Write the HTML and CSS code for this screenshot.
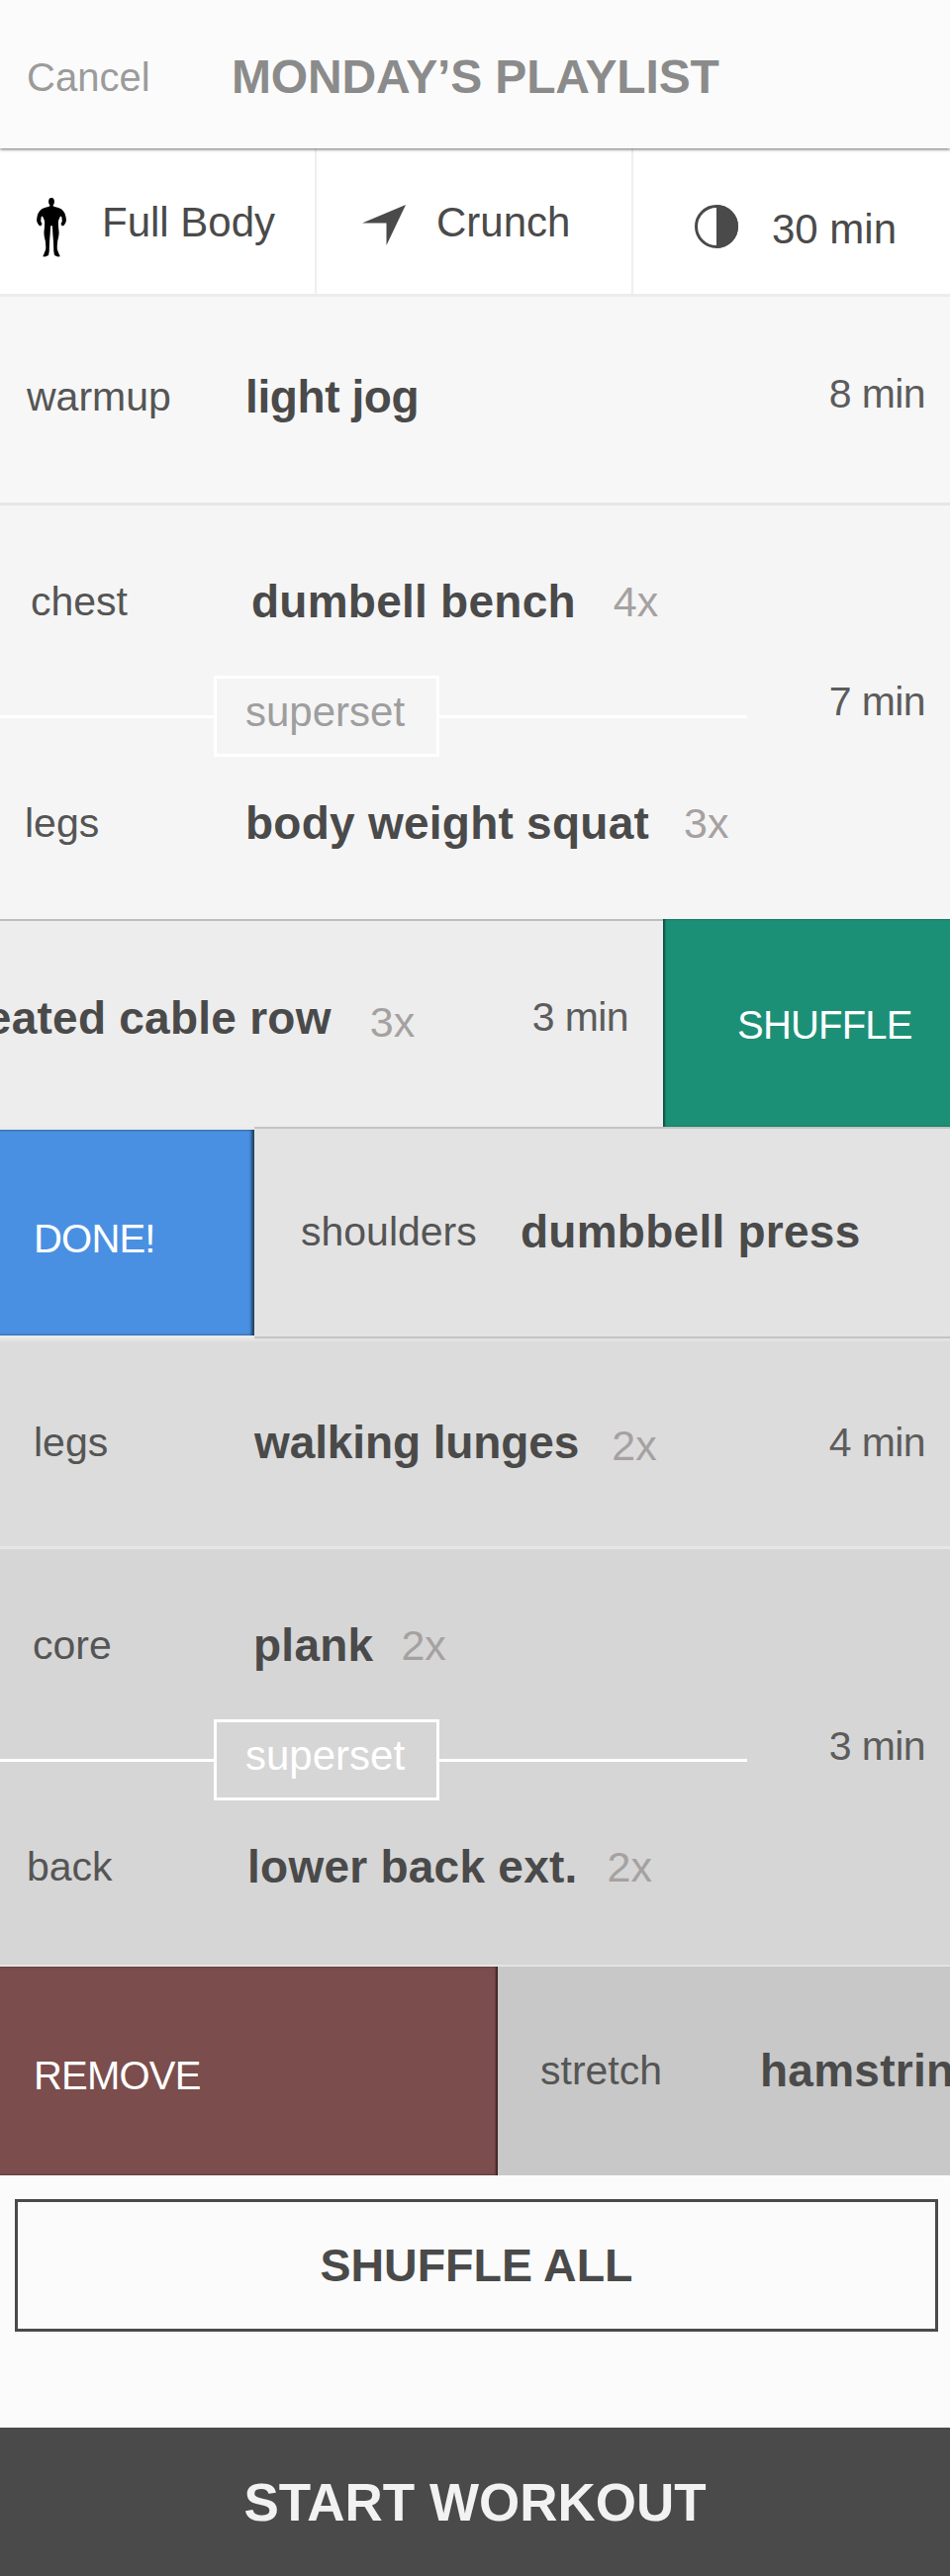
FILE: index.html
```html
<!DOCTYPE html>
<html lang="en">
<head>
    <meta charset="utf-8"/>
    <meta name="viewport" content="width=device-width, initial-scale=1.0"/>
    <title>Monday's Playlist</title>
    <link rel="stylesheet" href="styles.css">
</head>
<body>
<div class="header">
    <span class="cancel">Cancel</span>
    <h1 class="title">MONDAY’S PLAYLIST</h1>
</div>

<div class="filters">
    <div class="filter filter-body">
        <svg class="icon-body" viewBox="110 88 95 182">
            <path d="M157 88c-6 0-10 5-10 12 0 5 2 9 4 11l-1 4c-8 3-18 4-25 9-8 6-13 16-14 27-1 6-1 10 1 14l5 9 6 2 4-7-4-8 1-12c2-4 3-5 5-2 3 6 6 12 6 18 0 10-1 19-2 28-1 10 2 20 4 29 1 10 2 18 1 27l-6 15-3 6 8 1 10-5 2-12 1-30 2-24 1-24 3-1 3 1 1 24 2 24 1 30 2 12 10 5 8-1-3-6-6-15c-1-9 0-17 1-27 2-9 5-19 4-29-1-9-2-18-2-28 0-6 3-12 6-18 2-3 3-2 5 2l1 12-4 8 4 7 6-2 5-9c2-4 2-8 1-14-1-11-6-21-14-27-7-5-17-6-25-9l-1-4c2-2 4-6 4-11 0-7-4-12-10-12z"/>
        </svg>
        <span>Full Body</span>
    </div>
    <div class="filter filter-type">
        <svg class="icon-arrow" viewBox="0 0 44 41">
            <path d="M44 0L0 18.500H24.500V41z"/>
        </svg>
        <span>Crunch</span>
    </div>
    <div class="filter filter-time">
        <svg class="icon-time" viewBox="0 0 44 44">
            <circle cx="22" cy="22" r="20.500" fill="none" stroke="#4a4a4a" stroke-width="3"/>
            <path d="M22 0a22 22 0 0 1 0 44z" fill="#4a4a4a"/>
        </svg>
        <span class="filter-time-text">30 min</span>
    </div>
</div>

<div class="row row-warmup">
    <div class="exercise">
        <span class="label">warmup</span>
        <span class="name">light jog</span>
    </div>
    <span class="time">8 min</span>
</div>

<div class="group group-first">
    <div class="group-main">
        <div class="exercise ex-chest">
            <span class="label">chest</span>
            <span class="name">dumbell bench</span>
            <span class="reps">4x</span>
        </div>
        <div class="superset">
            <span class="superset-box">superset</span>
        </div>
        <div class="exercise ex-legs">
            <span class="label">legs</span>
            <span class="name">body weight squat</span>
            <span class="reps reps-near">3x</span>
        </div>
    </div>
    <span class="time">7 min</span>
</div>

<div class="swipe swipe-shuffle">
    <div class="card card-seated">
        <span class="name name-clipped">seated cable row</span>
        <span class="reps reps-low">3x</span>
        <span class="time time-card">3 min</span>
    </div>
    <div class="action action-shuffle">SHUFFLE</div>
</div>

<div class="swipe swipe-done">
    <div class="action action-done">DONE!</div>
    <div class="card card-shoulders">
        <span class="label label-short">shoulders</span>
        <span class="name">dumbbell press</span>
    </div>
</div>

<div class="row row-lunges">
    <div class="exercise">
        <span class="label">legs</span>
        <span class="name">walking lunges</span>
        <span class="reps reps-lunges">2x</span>
    </div>
    <span class="time">4 min</span>
</div>

<div class="group group-second">
    <div class="group-main">
        <div class="exercise ex-core">
            <span class="label">core</span>
            <span class="name">plank</span>
            <span class="reps reps-plank">2x</span>
        </div>
        <div class="superset superset-active">
            <span class="superset-box">superset</span>
        </div>
        <div class="exercise ex-back">
            <span class="label">back</span>
            <span class="name">lower back ext.</span>
            <span class="reps reps-close">2x</span>
        </div>
    </div>
    <span class="time">3 min</span>
</div>

<div class="swipe swipe-remove">
    <div class="action action-remove">REMOVE</div>
    <div class="card card-stretch">
        <span class="label label-stretch">stretch</span>
        <span class="name">hamstring stretch</span>
    </div>
</div>

<div class="bottom">
    <button class="shuffle-all">SHUFFLE ALL</button>
</div>
<button class="start">START WORKOUT</button>
</body>
</html>
```
FILE: styles.css
```css
* {
    box-sizing: border-box;
}

body {
    margin: 0;
    width: 960px;
    height: 2604px;
    overflow: hidden;
    background-color: #fbfbfb;
    color: #4a4a4a;
    font-family: "Liberation Sans", Arial, sans-serif;
    line-height: 50px;
}

/* header */
.header {
    position: relative;
    display: flex;
    height: 150px;
    padding: 53px 0 0 27px;
    background-color: #fbfbfb;
    box-shadow: 0 1px 3px rgba(0,0,0,0.6);
}

.cancel {
    width: 207px;
    color: #9b9b9b;
    font-size: 40px;
}

.title {
    margin: 0;
    color: #8b8b8b;
    font-size: 48px;
    line-height: 50px;
    letter-spacing: -0.150px;
}

/* filter bar */
.filters {
    display: flex;
    height: 150px;
    background-color: #fff;
    border-bottom: 3px solid #ececec;
}

.filter {
    display: flex;
    align-items: flex-start;
    width: 321px;
    padding-top: 50px;
    border-right: 2px solid #efefef;
    font-size: 42px;
}

.filter:last-child {
    border-right: 0;
}

.filter-time-text {
    margin-top: 7px;
}

.filter-body {
    padding-left: 37px;
}

.filter-type {
    padding-left: 46px;
}

.filter-time {
    padding-left: 62px;
}

.icon-body {
    width: 31px;
    height: 61px;
    margin: -1px 35px 0 0;
}

.icon-arrow {
    width: 44px;
    height: 41px;
    margin: 7px 31px 0 0;
    fill: #4a4a4a;
}

.icon-time {
    width: 44px;
    height: 44px;
    margin: 7px 34px 0 0;
}

/* list rows */
.row {
    display: flex;
    align-items: flex-start;
    justify-content: space-between;
    height: 211px;
    padding-right: 25px;
    border-bottom: 3px solid #e6e6e6;
}

.exercise {
    display: flex;
    align-items: flex-start;
}

.label {
    flex: none;
    width: 223px;
    font-size: 41px;
    color: #555;
}

.name {
    font-size: 46px;
    font-weight: bold;
    letter-spacing: 0.250px;
    white-space: nowrap;
}

.reps {
    margin-left: 38px;
    color: #a6a1a1;
    font-size: 43px;
}

.reps-near {
    margin-left: 35px;
}

.reps-close {
    margin-left: 30px;
}

.reps-plank {
    margin-left: 28px;
}

.reps-lunges {
    margin: 3px 0 0 33px;
}

.time {
    margin-top: -3px;
    color: #5c5c5c;
    font-size: 41px;
    letter-spacing: -0.600px;
}

.row-warmup {
    height: 211px;
    padding-top: 76px;
    padding-left: 27px;
    background-color: #f7f7f7;
}

.row-warmup .name {
    margin-left: -2px;
    letter-spacing: -0.400px;
}

.row-lunges {
    height: 213px;
    padding-top: 77px;
    padding-left: 34px;
    background-color: #dcdcdc;
    border-top: 3px solid #e3e3e3;
}

.row-lunges .name {
    letter-spacing: -0.100px;
}

.row-lunges .time {
    margin-top: 0;
}

/* superset groups */
.group {
    display: flex;
    justify-content: space-between;
    height: 418px;
    padding-top: 72px;
    padding-right: 25px;
}

.group-first {
    background-color: #f5f5f5;
}

.group-second {
    height: 422px;
    background-color: #d6d6d6;
    border-bottom: 2px solid #e4e4e4;
}

.group-main {
    width: 755px;
}

.group .time {
    align-self: center;
    margin: 0 0 94px;
}

.ex-chest {
    padding-left: 31px;
}

.ex-legs {
    padding-left: 25px;
}

.ex-core {
    padding-left: 33px;
}

.ex-back {
    padding-left: 27px;
}

.superset {
    display: flex;
    align-items: center;
    margin: 50px 0 42px;
}

.superset::before,
.superset::after {
    content: "";
    height: 3px;
    background-color: #fff;
}

.superset::before {
    width: 216px;
}

.superset::after {
    flex: 1;
}

.superset-box {
    width: 228px;
    height: 82px;
    padding: 9px 0 0 29px;
    border: 3px solid #fff;
    color: #9e9e9e;
    font-size: 42px;
}

.superset-active .superset-box {
    color: #fff;
}

/* swiped rows */
.swipe {
    display: flex;
    overflow: hidden;
    height: 210px;
}

.swipe-done {
    height: 214px;
    background-color: #ebebeb;
}

.swipe-remove {
    height: 211px;
    background-color: #fbfbfb;
}

.card {
    display: flex;
    align-items: flex-start;
    white-space: nowrap;
    overflow: hidden;
}

.action {
    color: #fff;
    font-size: 40px;
    letter-spacing: -0.800px;
}

.card-seated {
    flex: none;
    width: 670px;
    padding-top: 73px;
    background-color: #ededed;
    border-top: 2px solid #bcc0bc;
}

.name-clipped {
    margin-left: -40px;
}

.reps-low {
    margin: 4px 0 0 39px;
}

.time-card {
    margin-left: auto;
    margin-right: 35px;
    margin-top: -1px;
}

.action-shuffle {
    flex: 1;
    padding: 82px 0 0 75px;
    background-color: #1c9077;
    box-shadow: inset 2px 0 2px rgba(0,0,0,0.45);
}

.action-done {
    flex: none;
    width: 257px;
    height: 208px;
    margin-top: 3px;
    padding: 85px 0 0 34px;
    background-color: #4a90e2;
    box-shadow: inset -3px 0 3px rgba(0,0,0,0.55);
}

.card-shoulders {
    flex: 1;
    padding: 79px 0 0 47px;
    background-color: #e3e3e3;
    border-top: 2px solid #c4c4c4;
    border-bottom: 2px solid #c4c4c4;
}

.label-short {
    width: 222px;
}

.action-remove {
    flex: none;
    width: 503px;
    padding: 85px 0 0 34px;
    background-color: #7b4d4d;
    box-shadow: inset -2px 0 2px rgba(0,0,0,0.55);
}

.card-stretch {
    flex: 1;
    padding: 80px 0 0 43px;
    background-color: #c8c8c8;
}

.label-stretch {
    width: 222px;
}

/* bottom buttons */
.bottom {
    height: 255px;
    padding: 24px 12px 0 15px;
}

.shuffle-all {
    display: block;
    width: 100%;
    height: 134px;
    padding: 0;
    background-color: #fbfbfb;
    border: 3px solid #4a4a4a;
    color: #4a4a4a;
    font-family: inherit;
    font-size: 46.500px;
    font-weight: bold;
}

.start {
    display: block;
    width: 100%;
    height: 150px;
    padding: 0;
    background-color: #4a4a4a;
    border: 0;
    color: #f2f2f2;
    font-family: inherit;
    font-size: 53px;
    font-weight: bold;
}
```
